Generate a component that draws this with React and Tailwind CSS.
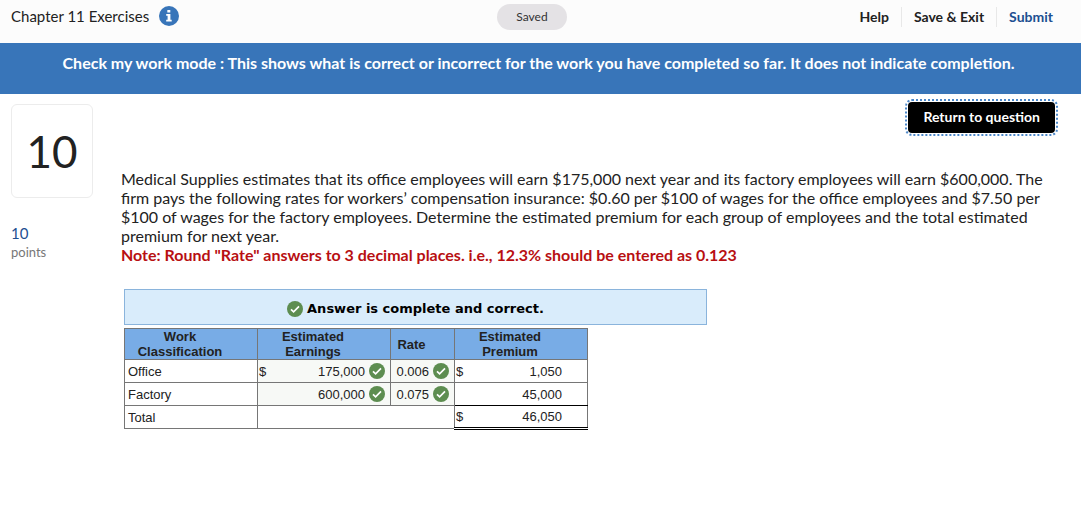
function CheckMark() {
  return (
    <svg viewBox="0 0 16 16" className="size-4 shrink-0" role="img" aria-label="Correct">
      <circle cx="8" cy="8" r="8" fill="#5d8d50" />
      <path d="M4 8.3 6.6 10.8 12 5.4" fill="none" stroke="#fff" strokeWidth="1.7" />
    </svg>
  );
}

function InfoIcon() {
  return (
    <svg viewBox="0 0 20 20" className="size-5" aria-hidden="true">
      <circle cx="10" cy="10" r="10" fill="#3875b9" />
      <rect x="8.3" y="4" width="3" height="2.6" rx=".4" fill="#fff" />
      <path d="M7.2 8h4.2v5.8h1.3v1.7H7.2v-1.7h1.4V9.7H7.2z" fill="#fff" />
    </svg>
  );
}

function Cell({ dollar, value, mark, className = "" }) {
  return (
    <td className={`border p-0 ${className}`}>
      <div className="flex items-center">
        {dollar && <span className="pl-px">$</span>}
        <span className="ml-auto">{value}</span>
        {mark && (
          <span className="pr-[5px] pl-1">
            <CheckMark />
          </span>
        )}
      </div>
    </td>
  );
}

const rows = [
  { name: "Office", dollar: true, earnings: "175,000", rate: "0.006", premium: "1,050" },
  { name: "Factory", dollar: false, earnings: "600,000", rate: "0.075", premium: "45,000", last: true },
];

export default function App() {
  return (
    <div className="bg-white font-['Lato',sans-serif] text-[#222]">
      <header className="grid h-[43px] grid-cols-[1fr_auto_1fr] bg-[#fcfcfc] pt-1 pr-7 pl-[11px]">
        <div className="flex h-6 items-center gap-2.5">
          <h1 className="text-[15px]">Chapter 11 Exercises</h1>
          <button type="button" aria-label="Assignment information">
            <InfoIcon />
          </button>
        </div>
        <div className="flex h-[26px] w-[70px] items-center justify-center rounded-full bg-[#e4e2e5] pb-px text-xs text-[#333]">
          Saved
        </div>
        <nav className="flex h-6 items-center justify-end pt-px text-sm font-bold">
          <button type="button" className="h-5 px-3">Help</button>
          <button type="button" className="h-5 border-l border-[#e8e8e8] px-3">Save &amp; Exit</button>
          <button type="button" className="h-5 border-l border-[#e8e8e8] pl-3 text-[#1d4f91]">Submit</button>
        </nav>
      </header>

      <div className="h-[51px] bg-[#3875b9] px-6 pt-[10px] pr-7 text-center text-base leading-5 font-bold text-white">
        Check my work mode : This shows what is correct or incorrect for the work you have completed so far. It does not indicate completion.
      </div>

      <div className="flex pt-[10px] pr-[26px] pl-[11px]">
        <aside className="w-[110px] shrink-0">
          <div className="flex h-[94px] w-[82px] items-center justify-center rounded-md border border-[#ececec] text-[44px]">
            10
          </div>
          <p className="mt-[25px] text-[15px] leading-5 text-[#1d4f91]">10</p>
          <p className="text-[13px] leading-[18px] text-[#777]">points</p>
        </aside>

        <main className="min-w-0 flex-1">
          <div className="-mt-[2px] flex justify-end">
            <button
              type="button"
              className="h-[31px] rounded-sm bg-black px-[15px] pb-[2px] text-sm font-bold text-white outline-2 outline-offset-1 outline-dotted outline-[#4a86c8]"
            >
              Return to question
            </button>
          </div>

          <div className="mt-9 text-base leading-[19px]">
            <p>
              Medical Supplies estimates that its office employees will earn $175,000 next year and its factory employees will earn $600,000. The firm pays the following rates for workers’ compensation insurance: $0.60 per $100 of wages for the office employees and $7.50 per $100 of wages for the factory employees. Determine the estimated premium for each group of employees and the total estimated premium for next year.
            </p>
            <p className="font-bold text-[#b80f12]">
              Note: Round "Rate" answers to 3 decimal places. i.e., 12.3% should be entered as 0.123
            </p>
          </div>

          <div className="mt-[25px] ml-[3px]">
            <div className="flex h-9 max-w-[583px] items-center justify-center gap-1 border border-[#8ab4dc] bg-[#d9ecfb] pt-1 text-[13px] font-bold text-black font-['DejaVu_Sans',sans-serif]">
              <CheckMark />
              Answer is complete and correct.
            </div>
            <table className="mt-[3px] w-[464px] table-fixed border-collapse font-['Liberation_Sans',sans-serif] text-[13px] leading-[15px]">
              <colgroup>
                <col className="w-[133px]" />
                <col className="w-[133px]" />
                <col className="w-16" />
                <col className="w-[133px]" />
              </colgroup>
              <thead>
                <tr className="h-[31px] bg-[#78ace6]">
                  {["Work Classification", "Estimated Earnings", "Rate", "Estimated Premium"].map((title) => (
                    <th key={title} scope="col" className="border border-[#767676] py-0 pr-[22px] pl-0">
                      {title}
                    </th>
                  ))}
                </tr>
              </thead>
              <tbody>
                {rows.map((row) => (
                  <tr key={row.name} className="h-[23px]">
                    <th scope="row" className="border border-[#767676] px-[3px] py-0 text-left font-normal">{row.name}</th>
                    <Cell dollar={row.dollar} value={row.earnings} mark className="border-[#767676] bg-[#f7f9f6]" />
                    <Cell value={row.rate} mark className="border-[#767676] bg-[#f7f9f6]" />
                    <Cell
                      dollar={row.dollar}
                      value={row.premium}
                      className={row.last ? "border-x-[#767676] border-t-[#767676] border-b-black pr-[25px]" : "border-[#767676] pr-[25px]"}
                    />
                  </tr>
                ))}
                <tr className="h-[23px]">
                  <th scope="row" className="border border-[#767676] px-[3px] py-0 text-left font-normal">Total</th>
                  <td colSpan={2} className="border border-[#767676]" />
                  <Cell dollar value="46,050" className="border-x-[#767676] border-t-black border-b-[3px] border-b-black [border-bottom-style:double] pr-[25px]" />
                </tr>
              </tbody>
            </table>
          </div>
        </main>
      </div>
    </div>
  );
}
